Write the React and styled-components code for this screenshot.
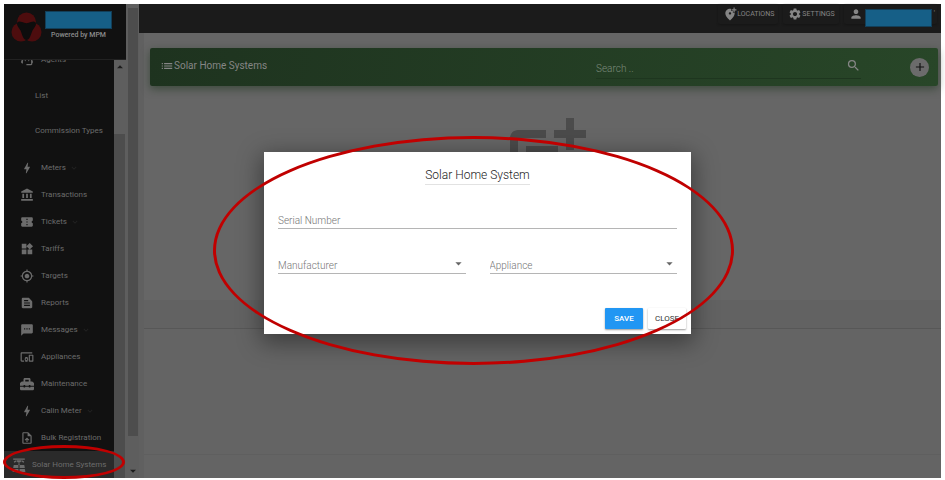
import React from "react";
import styled, { createGlobalStyle } from "styled-components";
import {
  MdBolt,
  MdAccountBalance,
  MdConfirmationNumber,
  MdWidgets,
  MdGpsFixed,
  MdTextSnippet,
  MdSms,
  MdDevicesOther,
  MdOutlineUploadFile,
  MdSettings,
  MdPerson,
  MdAddLocationAlt,
  MdList,
  MdSearch,
  MdAdd,
  MdPostAdd,
  MdSupportAgent,
  MdExpandMore,
  MdArrowDropDown,
  MdArrowDropUp,
} from "react-icons/md";
import { FaToolbox } from "react-icons/fa";

const GlobalStyle = createGlobalStyle`
  *, *::before, *::after { box-sizing: border-box; }
  body { margin: 0; background: #fff; font-family: Roboto, "Liberation Sans", sans-serif; }
  button, input, select { font-family: inherit; }
`;

const Frame = styled.div`
  position: relative;
  height: 100vh;
  padding: 4px 4px 2px;
`;

const Shell = styled.div`
  display: flex;
  height: 100%;
  background: #666;
`;

const Sidebar = styled.aside`
  display: flex;
  flex-direction: column;
  width: 122px;
  flex: none;
  background: #111;
`;

const Brand = styled.header`
  display: flex;
  gap: 3px;
  height: 56px;
  flex: none;
  padding: 7px 0 0 7px;
  border-bottom: 1px solid #222;
`;

const BrandInfo = styled.div`
  display: flex;
  flex-direction: column;
  gap: 1px;
  align-items: center;
`;

const Redacted = styled.div`
  width: 67px;
  height: 18px;
  flex: none;
  background: #165f87;
  border: 1px solid #123f59;
`;

const PoweredBy = styled.span`
  font-size: 7px;
  line-height: 10px;
  font-weight: 500;
  color: #8c8c8c;
  white-space: nowrap;
`;

const SidebarBody = styled.div`
  display: flex;
  flex: 1;
  min-height: 0;
`;

const Nav = styled.nav`
  display: flex;
  flex-direction: column;
  justify-content: flex-end;
  flex: 1;
  min-width: 0;
  overflow: hidden;
`;

const NavItem = styled.a`
  display: flex;
  align-items: center;
  gap: ${(p) => (p.$active ? 6 : 7)}px;
  height: 27px;
  flex: none;
  padding-left: ${(p) => (p.$active ? 8 : 16)}px;
  background: ${(p) => (p.$active ? "#2a2a2a" : "transparent")};
  color: #6c6c6c;
  font-size: 8px;
  font-weight: 400;
  text-decoration: none;
  white-space: nowrap;
`;

const NavIcon = styled.span`
  display: flex;
  justify-content: center;
  width: 14px;
  font-size: 14px;
`;

const Chevron = styled(MdExpandMore)`
  font-size: 10px;
  color: #222;
  margin-left: -4px;
`;

const SubList = styled.div`
  display: flex;
  flex-direction: column;
  flex: none;
  padding: 5px 0 6px;
`;

const SubItem = styled.a`
  display: flex;
  align-items: center;
  height: 35px;
  padding-left: 31px;
  color: #6c6c6c;
  font-size: 8px;
  font-weight: 400;
  text-decoration: none;
  white-space: nowrap;
`;

const InnerScroll = styled.div`
  display: flex;
  flex-direction: column;
  align-items: center;
  width: 12px;
  background: #5e5e5e;
  color: #1c1c1c;
  font-size: 14px;
`;

const InnerThumb = styled.div`
  width: 100%;
  flex: 1;
  margin-top: 60px;
  background: #4d4d4d;
  border-right: 1px solid #5e5e5e;
`;

const OuterScroll = styled.div`
  display: flex;
  flex-direction: column;
  align-items: center;
  justify-content: flex-end;
  width: 13px;
  flex: none;
  padding-top: 4px;
  background: #5e5e5e;
  color: #1c1c1c;
  font-size: 14px;
`;

const OuterThumb = styled.div`
  width: 10px;
  flex: 1;
  margin-bottom: 28px;
  background: #4d4d4d;
`;

const Main = styled.main`
  display: flex;
  flex-direction: column;
  flex: 1;
  min-width: 0;
`;

const TopBar = styled.header`
  display: flex;
  justify-content: flex-end;
  gap: 5px;
  height: 29px;
  flex: none;
  padding-right: 4px;
  background: #1b1b1b;
`;

const TopButton = styled.button`
  display: flex;
  align-items: center;
  gap: ${(p) => p.$gap}px;
  height: 20px;
  padding: 0 4px 0 5px;
  border: 0;
  border-radius: 2px;
  background: transparent;
  box-shadow: 0 1px 2px #151515;
  color: #858585;
  font-size: 7px;
  font-weight: 400;
  white-space: nowrap;

  svg { font-size: 14px; flex: none; }
`;

const AccountButton = styled(TopButton)`
  align-items: flex-start;
  padding-right: 2px;

  svg { margin-top: 3px; }
  div { margin-top: 5px; }
`;

const Caret = styled.span`
  margin-top: 6px;
  font-size: 7px;
  line-height: 7px;
`;

const Content = styled.section`
  display: flex;
  flex-direction: column;
  flex: 1;
  border-left: 5px solid #606060;
`;

const Banner = styled.div`
  display: flex;
  align-items: center;
  height: 38px;
  flex: none;
  margin: 15px 3px 0 6px;
  padding: 0 9px 0 10px;
  border-radius: 2px;
  background: linear-gradient(100deg, #1e331f, #284628);
  box-shadow: 0 3px 8px rgba(20, 45, 20, 0.5);
  color: #858585;
`;

const BannerTitle = styled.h1`
  display: flex;
  align-items: center;
  flex: 1;
  margin: 0;
  font-size: 10px;
  line-height: 14px;
  padding-bottom: 2px;
  font-weight: 400;

  svg { font-size: 14px; }
`;

const SearchField = styled.label`
  display: flex;
  align-items: center;
  flex: 0 1 265px;
  height: 23px;
  margin-right: 49px;
  border-bottom: 1px solid #1e361f;

  svg { font-size: 15px; margin-bottom: 3px; }
`;

const SearchInput = styled.input`
  flex: 1;
  min-width: 0;
  padding: 4px 0 0;
  border: 0;
  outline: 0;
  background: transparent;
  color: #858585;
  font-size: 10px;
  font-weight: 300;

  &::placeholder { color: #7c8b7c; opacity: 1; }
`;

const AddButton = styled.button`
  display: flex;
  align-items: center;
  justify-content: center;
  width: 19px;
  height: 19px;
  padding: 0;
  border: 0;
  border-radius: 50%;
  background: #6b6b6b;
  color: #111;
  font-size: 14px;
`;

const EmptyState = styled.div`
  display: flex;
  justify-content: center;
  flex: 1;
  padding: 24px 0 0 6px;
  color: #4b4b4b;
  font-size: 96px;
`;

const TableFooter = styled.div`
  height: 29px;
  flex: none;
  background: #626262;
  border-bottom: 1px solid #575757;
`;

const Blank = styled.div`
  height: 126px;
  flex: none;
  background: #646464;
  border-bottom: 1px solid #5f5f5f;
`;

const PageFooter = styled.footer`
  height: 23px;
  flex: none;
  background: #646464;
`;

const Overlay = styled.div`
  position: absolute;
  inset: 0;
  display: flex;
  align-items: center;
  justify-content: center;
  padding: 6px 0 0 10px;
`;

const DialogBox = styled.form`
  position: relative;
  display: flex;
  flex-direction: column;
  width: 90%;
  max-width: 427px;
  background: #fff;
  box-shadow: 0 6px 22px 3px rgba(0, 0, 0, 0.4);
`;

const DialogTitle = styled.h2`
  align-self: center;
  margin: 15px 0 0;
  padding-bottom: 1px;
  border-bottom: 1px solid #e2e2e2;
  color: #222;
  font-size: 12px;
  line-height: 16px;
  font-weight: 300;
`;

const Fields = styled.div`
  display: grid;
  grid-template-columns: 1fr 1fr;
  gap: 24px;
  padding: 23px 14px 0;
`;

const Field = styled.label`
  position: relative;
  display: flex;
  align-items: center;
  height: 21px;
  grid-column: ${(p) => (p.$wide ? "1 / -1" : "auto")};
  border-bottom: 1px solid #b5b5b5;
  color: #666;

  svg {
    position: absolute;
    right: 0;
    font-size: 15px;
    pointer-events: none;
  }
`;

const TextInput = styled.input`
  width: 100%;
  padding: 5px 0 0;
  border: 0;
  outline: 0;
  background: transparent;
  color: #555;
  font-size: 10px;
  font-weight: 300;

  &::placeholder { color: #757575; opacity: 1; }
`;

const Select = styled.select`
  width: 100%;
  padding: 5px 0 0;
  border: 0;
  outline: 0;
  appearance: none;
  background: transparent;
  color: #757575;
  font-size: 10px;
  font-weight: 300;
`;

const Actions = styled.div`
  display: flex;
  justify-content: flex-end;
  gap: 5px;
  padding: 34px 5px 5px;
`;

const ActionButton = styled.button`
  width: 38px;
  height: 21px;
  padding: 0;
  border: 0;
  border-radius: 1px;
  background: ${(p) => (p.$primary ? "#2196f3" : "#fff")};
  color: ${(p) => (p.$primary ? "#fff" : "#333")};
  box-shadow: 0 1px 2px rgba(0, 0, 0, 0.4);
  font-size: 8px;
  font-weight: ${(p) => (p.$primary ? 500 : 400)};
`;

const DialogMark = styled.div`
  position: absolute;
  inset: -16px -43px -31px -51px;
  border: 3px solid #c00000;
  border-radius: 50%;
  pointer-events: none;
`;

const NavMark = styled.div`
  position: absolute;
  left: 3px;
  bottom: 1px;
  width: 122px;
  height: 34px;
  border: 3px solid #c00000;
  border-radius: 50%;
  pointer-events: none;
`;

function Logo() {
  return (
    <svg width="31" height="32" viewBox="0 0 31 32" aria-hidden="true">
      <g fill="#4d0d0e">
        <circle cx="15.500" cy="11" r="9.500" />
        <circle cx="10" cy="21" r="9.500" />
        <circle cx="21" cy="21" r="9.500" />
      </g>
      <path
        d="M6 13c0-3 3-3 5-2 3 1.500 6 1.500 9 0 2-1 5-1 5 2 0 2-2 4-3.500 6.500-1 2-1.500 5-3 7.500-1.500 2.500-4.500 2.500-6 0-1.500-2.500-2-5.500-3-7.500C8 17 6 15 6 13z"
        fill="#0d0d0d"
      />
    </svg>
  );
}

function SolarIcon() {
  return (
    <svg width="14" height="14" viewBox="0 0 24 24" fill="currentColor" aria-hidden="true">
      <path d="M2 1h20v2H2zM8 4h8a4 4 0 0 1-8 0zM3 6l4-2 1 2-4 2zM21 6l-4-2-1 2 4 2zM11 9h2v3h-2z" />
      <path d="M3 12h8v5H2zM13 12h8l1 5h-9zM2 19h9v5H1zM13 19h9l1 5H13z" />
    </svg>
  );
}

const navItems = [
  { label: "Meters", Icon: MdBolt, expandable: true },
  { label: "Transactions", Icon: MdAccountBalance },
  { label: "Tickets", Icon: MdConfirmationNumber, expandable: true },
  { label: "Tariffs", Icon: MdWidgets },
  { label: "Targets", Icon: MdGpsFixed },
  { label: "Reports", Icon: MdTextSnippet },
  { label: "Messages", Icon: MdSms, expandable: true },
  { label: "Appliances", Icon: MdDevicesOther },
  { label: "Maintenance", Icon: FaToolbox },
  { label: "Calin Meter", Icon: MdBolt, expandable: true },
  { label: "Bulk Registration", Icon: MdOutlineUploadFile },
  { label: "Solar Home Systems", Icon: SolarIcon, active: true },
];

function NavEntry({ label, Icon, expandable, active }) {
  return (
    <NavItem href="#" $active={active}>
      <NavIcon>
        <Icon />
      </NavIcon>
      {label}
      {expandable && <Chevron />}
    </NavItem>
  );
}

export default function App() {
  return (
    <>
      <GlobalStyle />
      <Frame>
        <Shell>
          <Sidebar>
            <Brand>
              <Logo />
              <BrandInfo>
                <Redacted />
                <PoweredBy>Powered by MPM</PoweredBy>
              </BrandInfo>
            </Brand>
            <SidebarBody>
              <Nav>
                <NavEntry label="Agents" Icon={MdSupportAgent} />
                <SubList>
                  <SubItem href="#">List</SubItem>
                  <SubItem href="#">Commission Types</SubItem>
                </SubList>
                {navItems.map((item) => (
                  <NavEntry key={item.label} {...item} />
                ))}
              </Nav>
              <InnerScroll>
                <MdArrowDropUp />
                <InnerThumb />
              </InnerScroll>
            </SidebarBody>
          </Sidebar>
          <OuterScroll>
            <OuterThumb />
            <MdArrowDropDown />
          </OuterScroll>
          <Main>
            <TopBar>
              <TopButton $gap={0}>
                <MdAddLocationAlt />
                LOCATIONS
              </TopButton>
              <TopButton $gap={0}>
                <MdSettings />
                SETTINGS
              </TopButton>
              <AccountButton $gap={2} aria-label="Account">
                <MdPerson />
                <Redacted />
                <Caret>'</Caret>
              </AccountButton>
            </TopBar>
            <Content>
              <Banner>
                <BannerTitle>
                  <MdList />
                  Solar Home Systems
                </BannerTitle>
                <SearchField>
                  <SearchInput placeholder="Search .." aria-label="Search" />
                  <MdSearch />
                </SearchField>
                <AddButton aria-label="Add">
                  <MdAdd />
                </AddButton>
              </Banner>
              <EmptyState>
                <MdPostAdd />
              </EmptyState>
              <TableFooter />
              <Blank />
              <PageFooter />
            </Content>
          </Main>
        </Shell>
        <NavMark />
        <Overlay>
          <DialogBox role="dialog" aria-labelledby="dialog-title" onSubmit={(e) => e.preventDefault()}>
            <DialogTitle id="dialog-title">Solar Home System</DialogTitle>
            <Fields>
              <Field $wide>
                <TextInput placeholder="Serial Number" aria-label="Serial Number" />
              </Field>
              <Field>
                <Select aria-label="Manufacturer" defaultValue="">
                  <option value="">Manufacturer</option>
                </Select>
                <MdArrowDropDown />
              </Field>
              <Field>
                <Select aria-label="Appliance" defaultValue="">
                  <option value="">Appliance</option>
                </Select>
                <MdArrowDropDown />
              </Field>
            </Fields>
            <Actions>
              <ActionButton type="submit" $primary>SAVE</ActionButton>
              <ActionButton type="button">CLOSE</ActionButton>
            </Actions>
            <DialogMark />
          </DialogBox>
        </Overlay>
      </Frame>
    </>
  );
}
